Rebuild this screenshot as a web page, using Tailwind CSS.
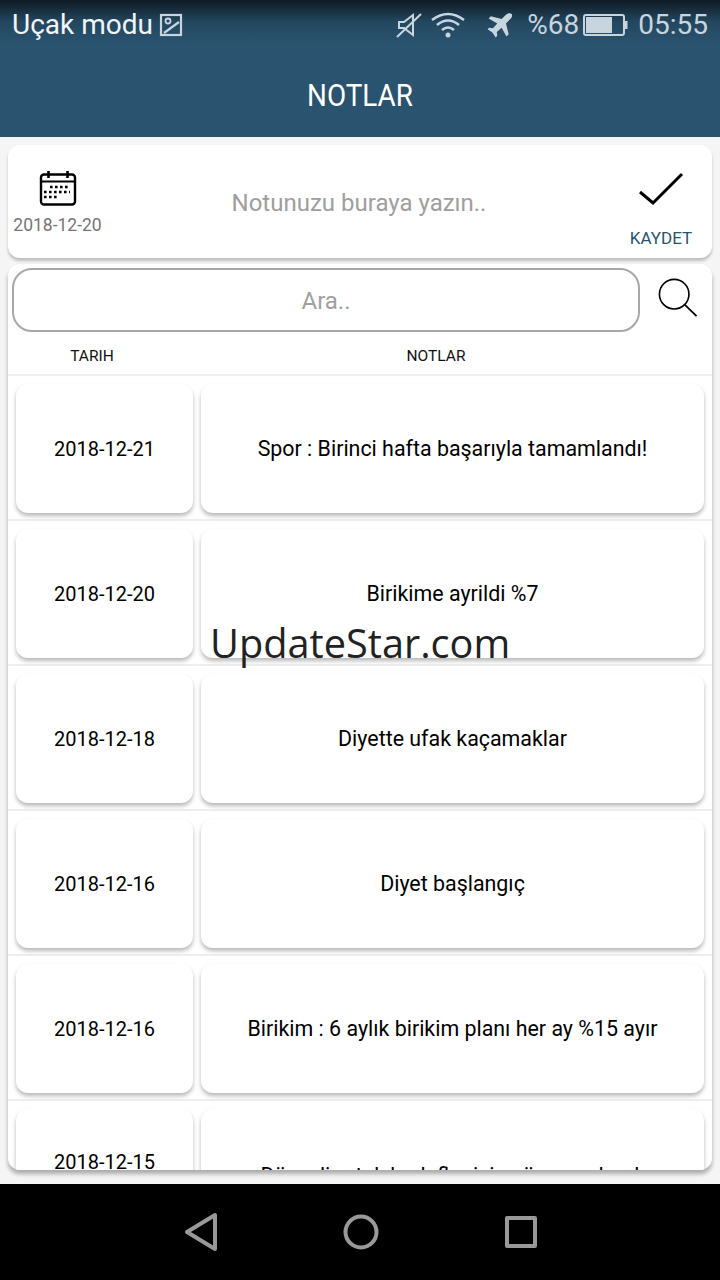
<!DOCTYPE html>
<html lang="tr">

<head>
    <meta charset="UTF-8">
    <meta name="viewport" content="width=device-width, initial-scale=1.0">
    <title>Notlar</title>
    <script src="https://cdn.jsdelivr.net/npm/@tailwindcss/browser@4"></script>
</head>

<body class="bg-[#f5f5f5] font-['Roboto',sans-serif]">
    <div class="relative w-[720px] h-[1280px] overflow-hidden flex flex-col">
        <!-- header -->
        <div class="h-[137px] bg-[#2a536f] relative shrink-0">
            <div class="absolute inset-x-0 top-0 h-[44px] bg-gradient-to-b from-[#0f1b24] via-[#234760] to-[#2a536f]"></div>
            <div class="relative h-[50px] flex items-center pl-3 pr-3 text-[28px] text-[#c9d5de]">
                <span class="text-[#f2f5f7]">Uçak modu</span>
                <svg class="ml-[6px] mt-[-1px]" width="24" height="24" viewBox="0 0 24 24" fill="none" stroke="#c9d5de" stroke-width="2.2">
                    <rect x="2" y="2" width="20" height="20" />
                    <circle cx="9" cy="8" r="2.5" stroke-width="1.8" />
                    <path d="M5 20 L20 9" />
                </svg>
                <div class="ml-auto flex items-center">
                    <svg width="26" height="28" viewBox="0 0 26 28" fill="none" stroke="#c9d5de" stroke-width="2">
                        <path d="M3 11 h5 l9 -7 v20 l-9 -7 h-5z" />
                        <path d="M1 26 L25 3" />
                    </svg>
                    <svg class="ml-[9px]" width="34" height="26" viewBox="0 0 34 26" fill="none" stroke="#c9d5de" stroke-width="2.6">
                        <path d="M1 8 Q17 -4 33 8" />
                        <path d="M6 13 Q17 4 28 13" />
                        <path d="M11 18 Q17 13 23 18" />
                        <circle cx="17" cy="23" r="2.5" fill="#c9d5de" stroke="none" />
                    </svg>
                    <svg class="ml-[22px]" width="26" height="26" viewBox="0 0 24 24" fill="#c9d5de">
                        <path d="M23 2 C21.5 0.5 19 1 17.5 2.5 L13.5 6.5 L3.5 4 L1.5 6 L9.5 10.5 L5.5 15 L2 14.5 L0.5 16 L5 19 L8 23.5 L9.5 22 L9 18.5 L13.5 14.5 L18 22.5 L20 20.5 L17.5 10.5 L21.5 6.5 C23 5 23.5 3 23 2z" />
                    </svg>
                    <span class="ml-[14px]">%68</span>
                    <svg class="ml-[4px]" width="45" height="24" viewBox="0 0 45 24">
                        <rect x="1" y="2" width="40" height="20" rx="2" fill="none" stroke="#c9d5de" stroke-width="2" />
                        <rect x="3" y="4" width="26" height="16" fill="#c9d5de" />
                        <rect x="42" y="8" width="2.5" height="8" fill="#c9d5de" />
                    </svg>
                    <span class="ml-[10px]">05:55</span>
                </div>
            </div>
            <div class="absolute inset-x-0 top-[76px] text-center text-[32px] leading-[38px] text-white scale-x-[0.87]">NOTLAR</div>
        </div>

        <!-- content -->
        <div class="flex-1 px-2 pt-2">
            <!-- new note -->
            <div class="h-[113px] bg-white rounded-xl shadow-[0_3px_3px_rgba(0,0,0,0.22)] flex">
                <div class="w-[99px] flex flex-col items-center pt-[25px]">
                    <svg width="38" height="38" viewBox="0 0 38 38" fill="none" stroke="#000">
                        <rect x="2" y="4.5" width="34" height="30" rx="3" stroke-width="2.4" />
                        <path d="M2 11.5 h34" stroke-width="2" />
                        <path d="M9.5 1 v7 M28.5 1 v7" stroke-width="2.6" />
                        <path d="M11 17 h20 M5 22 h26 M5 27 h14" stroke-width="2.4" stroke-dasharray="2.6 2.4" />
                    </svg>
                    <div class="text-[17.5px] leading-5 text-[#757575] mt-[7px] whitespace-nowrap">2018-12-20</div>
                </div>
                <div class="flex-1 text-center text-[24px] text-[#9e9e9e] pt-[42px] leading-[32px] pr-[13px]">Notunuzu buraya yazın..</div>
                <div class="w-[88px] flex flex-col items-center pt-[27px] pr-[14px]">
                    <svg width="46" height="36" viewBox="0 0 46 36" fill="none" stroke="#000" stroke-width="3">
                        <path d="M2 20 L15 31 L44 2" />
                    </svg>
                    <div class="text-[17px] leading-5 text-[#2a536f] mt-[20px] whitespace-nowrap">KAYDET</div>
                </div>
            </div>

            <!-- list -->
            <div class="mt-[6px] h-[906px] bg-white rounded-xl shadow-[0_4px_4px_rgba(0,0,0,0.3)] overflow-hidden">
                <div class="h-[72px] pt-[4px] pl-1 flex">
                    <div class="w-[628px] h-[64px] rounded-[20px] border-2 border-[#a8a8a8] text-center text-[24px] leading-[62px] text-[#a0a0a0]">Ara..</div>
                    <svg class="ml-[18px] mt-[10px]" width="40" height="40" viewBox="0 0 42 42" fill="none" stroke="#000">
                        <circle cx="17" cy="17" r="15.5" stroke-width="1.7" />
                        <path d="M28 28 L40.5 40" stroke-width="1.9" />
                    </svg>
                </div>
                <div class="flex h-[40px] items-start text-[15.5px] leading-[20px] text-[#111] border-b-2 border-[#eeeeee] pt-[10px]">
                    <div class="w-[168px] text-center">TARIH</div>
                    <div class="w-[528px] text-center pr-[8px]">NOTLAR</div>
                </div>

                <div class="h-[145px] flex gap-2 px-[8px] pt-[8px] border-b-2 border-[#eeeeee]">
                    <div class="w-[177px] h-[129px] bg-white rounded-xl shadow-[0_3px_4px_rgba(0,0,0,0.28)] flex items-center justify-center text-[20px] text-black">2018-12-21</div>
                    <div class="w-[503px] h-[129px] bg-white rounded-xl shadow-[0_3px_4px_rgba(0,0,0,0.28)] flex items-center justify-center pt-[2px] text-[21.4px] text-black">Spor : Birinci hafta başarıyla tamamlandı!</div>
                </div>
                <div class="h-[145px] flex gap-2 px-[8px] pt-[8px] border-b-2 border-[#eeeeee]">
                    <div class="w-[177px] h-[129px] bg-white rounded-xl shadow-[0_3px_4px_rgba(0,0,0,0.28)] flex items-center justify-center text-[20px] text-black">2018-12-20</div>
                    <div class="w-[503px] h-[129px] bg-white rounded-xl shadow-[0_3px_4px_rgba(0,0,0,0.28)] flex items-center justify-center pt-[2px] text-[21.4px] text-black">Birikime ayrildi %7</div>
                </div>
                <div class="h-[145px] flex gap-2 px-[8px] pt-[8px] border-b-2 border-[#eeeeee]">
                    <div class="w-[177px] h-[129px] bg-white rounded-xl shadow-[0_3px_4px_rgba(0,0,0,0.28)] flex items-center justify-center text-[20px] text-black">2018-12-18</div>
                    <div class="w-[503px] h-[129px] bg-white rounded-xl shadow-[0_3px_4px_rgba(0,0,0,0.28)] flex items-center justify-center pt-[2px] text-[21.4px] text-black">Diyette ufak kaçamaklar</div>
                </div>
                <div class="h-[145px] flex gap-2 px-[8px] pt-[8px] border-b-2 border-[#eeeeee]">
                    <div class="w-[177px] h-[129px] bg-white rounded-xl shadow-[0_3px_4px_rgba(0,0,0,0.28)] flex items-center justify-center text-[20px] text-black">2018-12-16</div>
                    <div class="w-[503px] h-[129px] bg-white rounded-xl shadow-[0_3px_4px_rgba(0,0,0,0.28)] flex items-center justify-center pt-[2px] text-[21.4px] text-black">Diyet başlangıç</div>
                </div>
                <div class="h-[145px] flex gap-2 px-[8px] pt-[8px] border-b-2 border-[#eeeeee]">
                    <div class="w-[177px] h-[129px] bg-white rounded-xl shadow-[0_3px_4px_rgba(0,0,0,0.28)] flex items-center justify-center text-[20px] text-black">2018-12-16</div>
                    <div class="w-[503px] h-[129px] bg-white rounded-xl shadow-[0_3px_4px_rgba(0,0,0,0.28)] flex items-center justify-center pt-[2px] text-[21.4px] text-black">Birikim : 6 aylık birikim planı her ay %15 ayır</div>
                </div>
                <div class="h-[145px] flex gap-2 px-[8px] pt-[8px]">
                    <div class="w-[177px] h-[129px] bg-white rounded-xl shadow-[0_3px_4px_rgba(0,0,0,0.28)] flex justify-center pt-[41px] text-[20px] leading-[24px] text-black">2018-12-15</div>
                    <div class="w-[503px] h-[129px] bg-white rounded-xl shadow-[0_3px_4px_rgba(0,0,0,0.28)] flex justify-center pt-[53px] text-[21.4px] leading-[28px] text-black whitespace-nowrap">Düzenli ortak hedefler için süre ayarlandı</div>
                </div>
            </div>
        </div>

        <!-- nav bar -->
        <div class="h-[96px] bg-black flex items-center shrink-0">
            <svg class="ml-[183px]" width="36" height="40" viewBox="0 0 36 40" fill="none" stroke="#999" stroke-width="4" stroke-linejoin="round">
                <path d="M32 3 V37 L4 20z" />
            </svg>
            <svg class="ml-[124px]" width="36" height="36" viewBox="0 0 36 36" fill="none" stroke="#999" stroke-width="4">
                <circle cx="18" cy="18" r="15.5" />
            </svg>
            <svg class="ml-[126px]" width="32" height="32" viewBox="0 0 32 32" fill="none" stroke="#999" stroke-width="4" stroke-linejoin="round">
                <rect x="2" y="2" width="28" height="28" />
            </svg>
        </div>

        <!-- watermark -->
        <div class="absolute left-[210px] top-[618px] text-[39.7px] leading-[50px] text-[#222] font-['Open_Sans',sans-serif]">UpdateStar.com</div>
    </div>
</body>

</html>
